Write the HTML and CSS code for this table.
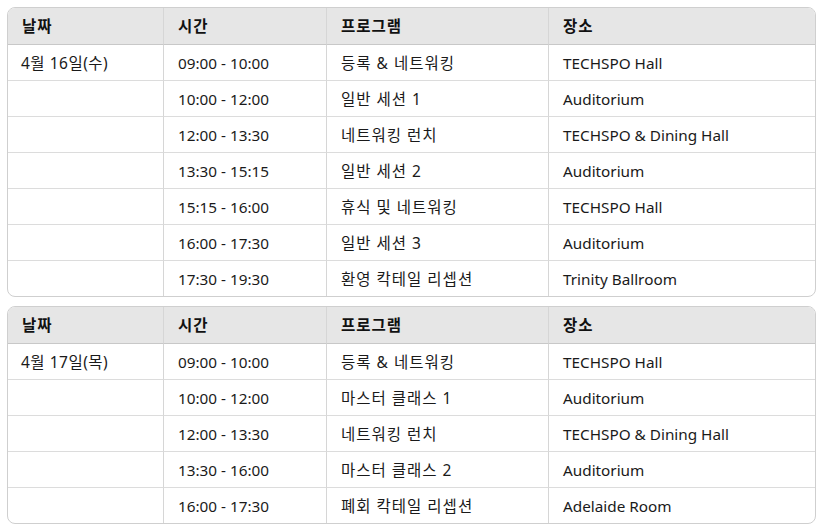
FILE: index.html
```html
<!DOCTYPE html>
<html lang="ko">
<head>
<meta charset="utf-8">
<link rel="stylesheet" href="styles.css">
</head>
<body>
<div class="page">
<table class="sched">
<colgroup><col class="c1"><col class="c2"><col class="c3"><col class="c4"></colgroup>
<thead><tr><th class="ko">날짜</th><th class="ko">시간</th><th class="ko">프로그램</th><th class="ko">장소</th></tr></thead>
<tbody>
<tr><td class="ko date">4월 16일(수)</td><td>09:00 - 10:00</td><td class="ko">등록 &amp; 네트워킹</td><td>TECHSPO Hall</td></tr>
<tr><td></td><td>10:00 - 12:00</td><td class="ko">일반 세션 1</td><td>Auditorium</td></tr>
<tr><td></td><td>12:00 - 13:30</td><td class="ko">네트워킹 런치</td><td>TECHSPO &amp; Dining Hall</td></tr>
<tr><td></td><td>13:30 - 15:15</td><td class="ko">일반 세션 2</td><td>Auditorium</td></tr>
<tr><td></td><td>15:15 - 16:00</td><td class="ko">휴식 및 네트워킹</td><td>TECHSPO Hall</td></tr>
<tr><td></td><td>16:00 - 17:30</td><td class="ko">일반 세션 3</td><td>Auditorium</td></tr>
<tr><td></td><td>17:30 - 19:30</td><td class="ko">환영 칵테일 리셉션</td><td>Trinity Ballroom</td></tr>
</tbody>
</table>
<table class="sched">
<colgroup><col class="c1"><col class="c2"><col class="c3"><col class="c4"></colgroup>
<thead><tr><th class="ko">날짜</th><th class="ko">시간</th><th class="ko">프로그램</th><th class="ko">장소</th></tr></thead>
<tbody>
<tr><td class="ko date">4월 17일(목)</td><td>09:00 - 10:00</td><td class="ko">등록 &amp; 네트워킹</td><td>TECHSPO Hall</td></tr>
<tr><td></td><td>10:00 - 12:00</td><td class="ko">마스터 클래스 1</td><td>Auditorium</td></tr>
<tr><td></td><td>12:00 - 13:30</td><td class="ko">네트워킹 런치</td><td>TECHSPO &amp; Dining Hall</td></tr>
<tr><td></td><td>13:30 - 16:00</td><td class="ko">마스터 클래스 2</td><td>Auditorium</td></tr>
<tr><td></td><td>16:00 - 17:30</td><td class="ko">폐회 칵테일 리셉션</td><td>Adelaide Room</td></tr>
</tbody>
</table>
</div>
</body>
</html>
```
FILE: styles.css
```css
html, body { margin: 0; padding: 0; background: #fff; }
.page {
  padding: 7px 6px 0 7px;
  display: flex;
  flex-direction: column;
  gap: 9px;
  font-family: "Noto Sans", "Noto Sans CJK KR", sans-serif;
  font-size: 15.3px;
  color: #1a1a1a;
}
.sched {
  width: 809px;
  table-layout: fixed;
  border-collapse: separate;
  border-spacing: 0;
  border: 1px solid #cfcfcf;
  border-radius: 8px;
  overflow: hidden;
}
.c1 { width: 156px; }
.c2 { width: 163px; }
.c3 { width: 222px; }
.c4 { width: auto; }
.sched th, .sched td {
  text-align: left;
  padding: 0 0 0 14px;
  border-right: 1px solid #d6d6d6;
  border-bottom: 1px solid #dcdcdc;
  white-space: nowrap;
  vertical-align: middle;
  line-height: 20px;
}
.sched th:last-child, .sched td:last-child { border-right: none; }
.sched tr:last-child td { border-bottom: none; }
.sched th {
  height: 36px;
  background: #e6e6e6;
  font-weight: 700;
  border-bottom: 1px solid #c8c8c8;
  color: #111;
}
.sched td { height: 35px; }
.sched .ko { font-size: 15.5px; letter-spacing: 1px; }
.sched .date { padding-left: 13px; letter-spacing: 0.5px; }
```
